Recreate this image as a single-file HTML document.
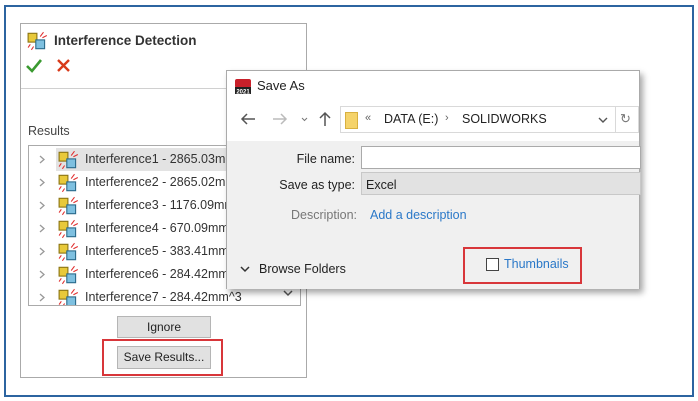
<!DOCTYPE html>
<html><head><meta charset="utf-8">
<style>
*{box-sizing:border-box;margin:0;padding:0}
body{width:698px;height:401px;background:#fff;position:relative;overflow:hidden;font-family:"Liberation Sans",sans-serif;font-size:12px;color:#222}
.abs{position:absolute}
.frame{left:4px;top:5px;width:690px;height:392px;border:2px solid #2c64a0}
.panel{left:20px;top:23px;width:287px;height:355px;border:1px solid #aaa;background:#fff}
.row{position:absolute;left:0;height:23px;width:270px;line-height:23px;white-space:nowrap}
.row .chev{position:absolute;left:10px;top:7px}
.row .ic{position:absolute;left:29px;top:2px}
.row .t{position:absolute;left:56px;top:0;font-size:12.5px;color:#333}
.btn{background:#e1e1e1;border:1px solid #b5b5b5;text-align:center;line-height:20px;font-size:12px;color:#222}
.red{border:2px solid #d8363a}
.dlg{left:226px;top:70px;width:414px;height:219px;background:#fff;border:1px solid #aaa;box-shadow:3px 4px 6px rgba(0,0,0,.35)}
.lbl{font-size:12.5px;color:#222;text-align:right}
</style></head><body>
<div class="abs frame"></div>

<div class="abs panel">
  <svg class="abs" style="left:6px;top:6px" width="22" height="22" viewBox="0 0 20 20">
    <rect x="1" y="3" width="8" height="8" fill="#e8c93a" stroke="#8a7414"/>
    <rect x="8" y="9" width="8" height="8" fill="#7ec0e0" stroke="#2a6a8a"/>
    <path d="M12 6l3-4M14 7l4-2M3 13l-2 3M6 15l-2 3" stroke="#e03030" stroke-width="1"/>
  </svg>
  <div class="abs" style="left:33px;top:9px;font-weight:bold;font-size:13.5px;color:#333">Interference Detection</div>
  <svg class="abs" style="left:5px;top:35px" width="16" height="14" viewBox="0 0 16 14"><path d="M1 7l5 5L15 1" stroke="#3a9a30" stroke-width="2.6" fill="none"/></svg>
  <svg class="abs" style="left:36px;top:35px" width="13" height="13" viewBox="0 0 13 13"><path d="M1 1l11 11M12 1L1 12" stroke="#d83a1a" stroke-width="2.4"/></svg>
  <div class="abs" style="left:0;top:64px;width:285px;height:1px;background:#d0d0d0"></div>
  <div class="abs" style="left:7px;top:100px;font-size:12.5px;color:#444">Results</div>
  <div class="abs" style="left:7px;top:121px;width:273px;height:161px;border:1px solid #aaa;overflow:hidden;background:#fff">
    <div class="abs" style="left:27px;top:2px;width:180px;height:23px;background:#e3e3e3"></div>
    <div class="row" style="top:2px"><svg class="chev" width="6" height="9"><path d="M1 1l4 3.5L1 8" stroke="#999" stroke-width="1.3" fill="none"/></svg><svg class="ic" width="22" height="20" viewBox="0 0 20 18"><rect x="1" y="2" width="8" height="8" fill="#e8c93a" stroke="#8a7414"/><rect x="8" y="8" width="8" height="8" fill="#7ec0e0" stroke="#2a6a8a"/><path d="M12 5l3-4M14 6l4-2M3 12l-2 3M6 14l-2 3" stroke="#e03030"/></svg><span class="t">Interference1 - 2865.03mm^3</span></div>
    <div class="row" style="top:25px"><svg class="chev" width="6" height="9"><path d="M1 1l4 3.5L1 8" stroke="#999" stroke-width="1.3" fill="none"/></svg><svg class="ic" width="22" height="20" viewBox="0 0 20 18"><rect x="1" y="2" width="8" height="8" fill="#e8c93a" stroke="#8a7414"/><rect x="8" y="8" width="8" height="8" fill="#7ec0e0" stroke="#2a6a8a"/><path d="M12 5l3-4M14 6l4-2M3 12l-2 3M6 14l-2 3" stroke="#e03030"/></svg><span class="t">Interference2 - 2865.02mm^3</span></div>
    <div class="row" style="top:48px"><svg class="chev" width="6" height="9"><path d="M1 1l4 3.5L1 8" stroke="#999" stroke-width="1.3" fill="none"/></svg><svg class="ic" width="22" height="20" viewBox="0 0 20 18"><rect x="1" y="2" width="8" height="8" fill="#e8c93a" stroke="#8a7414"/><rect x="8" y="8" width="8" height="8" fill="#7ec0e0" stroke="#2a6a8a"/><path d="M12 5l3-4M14 6l4-2M3 12l-2 3M6 14l-2 3" stroke="#e03030"/></svg><span class="t">Interference3 - 1176.09mm^3</span></div>
    <div class="row" style="top:71px"><svg class="chev" width="6" height="9"><path d="M1 1l4 3.5L1 8" stroke="#999" stroke-width="1.3" fill="none"/></svg><svg class="ic" width="22" height="20" viewBox="0 0 20 18"><rect x="1" y="2" width="8" height="8" fill="#e8c93a" stroke="#8a7414"/><rect x="8" y="8" width="8" height="8" fill="#7ec0e0" stroke="#2a6a8a"/><path d="M12 5l3-4M14 6l4-2M3 12l-2 3M6 14l-2 3" stroke="#e03030"/></svg><span class="t">Interference4 - 670.09mm^3</span></div>
    <div class="row" style="top:94px"><svg class="chev" width="6" height="9"><path d="M1 1l4 3.5L1 8" stroke="#999" stroke-width="1.3" fill="none"/></svg><svg class="ic" width="22" height="20" viewBox="0 0 20 18"><rect x="1" y="2" width="8" height="8" fill="#e8c93a" stroke="#8a7414"/><rect x="8" y="8" width="8" height="8" fill="#7ec0e0" stroke="#2a6a8a"/><path d="M12 5l3-4M14 6l4-2M3 12l-2 3M6 14l-2 3" stroke="#e03030"/></svg><span class="t">Interference5 - 383.41mm^3</span></div>
    <div class="row" style="top:117px"><svg class="chev" width="6" height="9"><path d="M1 1l4 3.5L1 8" stroke="#999" stroke-width="1.3" fill="none"/></svg><svg class="ic" width="22" height="20" viewBox="0 0 20 18"><rect x="1" y="2" width="8" height="8" fill="#e8c93a" stroke="#8a7414"/><rect x="8" y="8" width="8" height="8" fill="#7ec0e0" stroke="#2a6a8a"/><path d="M12 5l3-4M14 6l4-2M3 12l-2 3M6 14l-2 3" stroke="#e03030"/></svg><span class="t">Interference6 - 284.42mm^3</span></div>
    <div class="row" style="top:140px"><svg class="chev" width="6" height="9"><path d="M1 1l4 3.5L1 8" stroke="#999" stroke-width="1.3" fill="none"/></svg><svg class="ic" width="22" height="20" viewBox="0 0 20 18"><rect x="1" y="2" width="8" height="8" fill="#e8c93a" stroke="#8a7414"/><rect x="8" y="8" width="8" height="8" fill="#7ec0e0" stroke="#2a6a8a"/><path d="M12 5l3-4M14 6l4-2M3 12l-2 3M6 14l-2 3" stroke="#e03030"/></svg><span class="t">Interference7 - 284.42mm^3</span></div>
    <svg class="abs" style="left:254px;top:144px" width="10" height="7"><path d="M1 1l4 4 4-4" stroke="#555" stroke-width="1.5" fill="none"/></svg>
  </div>
  <div class="abs btn" style="left:96px;top:292px;width:94px;height:22px">Ignore</div>
  <div class="abs btn" style="left:96px;top:322px;width:94px;height:23px">Save Results...</div>
  <div class="abs red" style="left:81px;top:315px;width:121px;height:37px"></div>
</div>

<div class="abs dlg">
  <svg class="abs" style="left:7px;top:6px" width="18" height="18" viewBox="0 0 18 18">
    <rect x="1" y="2" width="16" height="9" rx="2" fill="#c8202a"/>
    <rect x="1" y="10" width="16" height="7" fill="#222"/>
    <text x="9" y="16.5" font-size="6" fill="#fff" text-anchor="middle" font-family="Liberation Sans" font-weight="bold">2021</text>
  </svg>
  <div class="abs" style="left:30px;top:7px;font-size:13px;color:#222">Save As</div>
  <svg class="abs" style="left:13px;top:42px" width="16" height="12"><path d="M15 6H2M7 1L2 6l5 5" stroke="#555" stroke-width="1.5" fill="none"/></svg>
  <svg class="abs" style="left:45px;top:42px" width="16" height="12"><path d="M1 6h13M9 1l5 5-5 5" stroke="#bbb" stroke-width="1.5" fill="none"/></svg>
  <svg class="abs" style="left:74px;top:46px" width="7" height="5"><path d="M1 1l2.5 2.5L6 1" stroke="#777" stroke-width="1" fill="none"/></svg>
  <svg class="abs" style="left:92px;top:40px" width="12" height="16"><path d="M6 15V2M1 7l5-5 5 5" stroke="#555" stroke-width="1.5" fill="none"/></svg>
  <div class="abs" style="left:113px;top:35px;width:299px;height:27px;border:1px solid #d9d9d9;background:#fff"></div>
  <div class="abs" style="left:118px;top:41px;width:13px;height:17px;background:#f5d36a;border:1px solid #d8b040"></div>
  <div class="abs" style="left:138px;top:41px;font-size:11px;color:#666">«</div>
  <div class="abs" style="left:157px;top:41px;font-size:12.5px;color:#222">DATA (E:)</div>
  <div class="abs" style="left:218px;top:41px;font-size:11px;color:#666">›</div>
  <div class="abs" style="left:235px;top:41px;font-size:12.5px;color:#222">SOLIDWORKS</div>
  <svg class="abs" style="left:371px;top:46px" width="10" height="7"><path d="M1 1l4 4 4-4" stroke="#555" stroke-width="1.4" fill="none"/></svg>
  <div class="abs" style="left:388px;top:35px;width:1px;height:27px;background:#d9d9d9"></div>
  <div class="abs" style="left:393px;top:40px;font-size:13px;color:#777">↻</div>
  <div class="abs" style="left:0;top:70px;width:412px;height:148px;background:#f0f0f0"></div>
  <div class="abs lbl" style="left:40px;top:81px;width:88px">File name:</div>
  <div class="abs" style="left:134px;top:75px;width:280px;height:23px;background:#fff;border:1px solid #aaa"></div>
  <div class="abs lbl" style="left:20px;top:107px;width:108px">Save as type:</div>
  <div class="abs" style="left:134px;top:101px;width:280px;height:23px;background:#e2e2e2;border:1px solid #c8c8c8"></div>
  <div class="abs" style="left:139px;top:107px;font-size:12.5px;color:#222">Excel</div>
  <div class="abs lbl" style="left:40px;top:137px;width:90px;color:#777">Description:</div>
  <div class="abs" style="left:143px;top:137px;font-size:12.5px;color:#2a78c8">Add a description</div>
  <svg class="abs" style="left:13px;top:195px" width="10" height="7"><path d="M1 1l4 4 4-4" stroke="#333" stroke-width="1.5" fill="none"/></svg>
  <div class="abs" style="left:32px;top:191px;font-size:12.5px;color:#222">Browse Folders</div>
  <div class="abs" style="left:259px;top:187px;width:13px;height:13px;border:1px solid #444;background:#fff"></div>
  <div class="abs" style="left:277px;top:186px;font-size:12.5px;color:#2a78c8">Thumbnails</div>
  <div class="abs red" style="left:236px;top:176px;width:119px;height:37px"></div>
</div>
</body></html>
